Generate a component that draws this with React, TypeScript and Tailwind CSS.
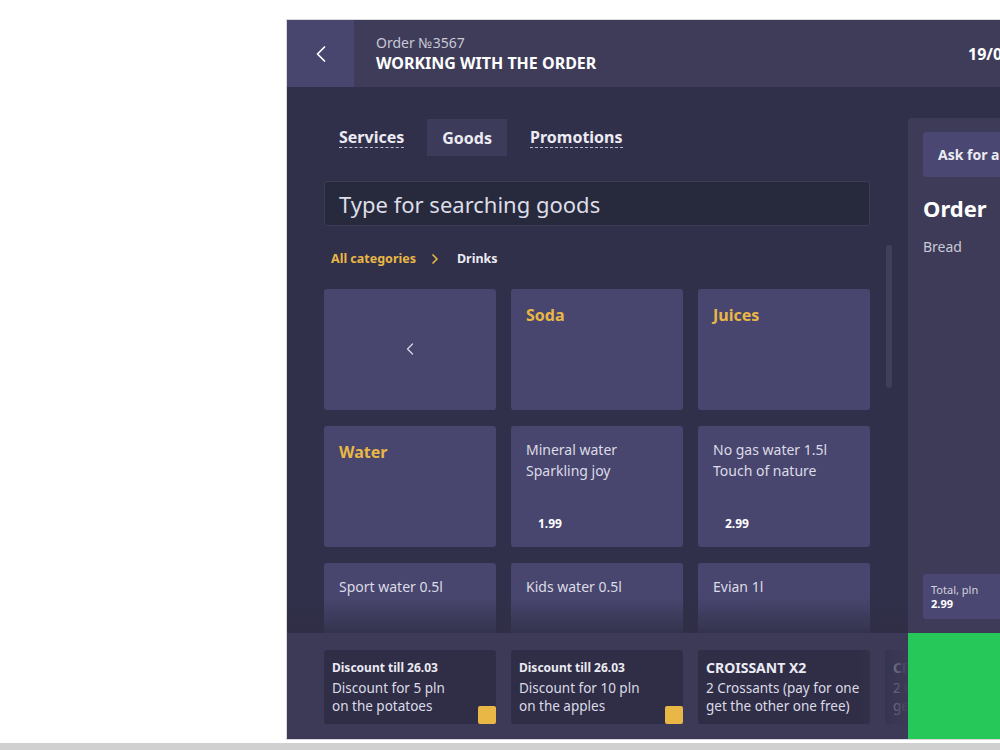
import { ChevronLeft, ChevronRight } from "lucide-react";

type Card =
  | { kind: "back" }
  | { kind: "category"; title: string }
  | { kind: "product"; lines: string[]; price?: string };

const cards: Card[] = [
  { kind: "back" },
  { kind: "category", title: "Soda" },
  { kind: "category", title: "Juices" },
  { kind: "category", title: "Water" },
  { kind: "product", lines: ["Mineral water", "Sparkling joy"], price: "1.99" },
  { kind: "product", lines: ["No gas water 1.5l", "Touch of nature"], price: "2.99" },
  { kind: "product", lines: ["Sport water 0.5l"] },
  { kind: "product", lines: ["Kids water 0.5l"] },
  { kind: "product", lines: ["Evian 1l"] },
];

const promos = [
  { title: "Discount till 26.03", text: ["Discount for 5 pln", "on the potatoes"], tag: true, caps: false },
  { title: "Discount till 26.03", text: ["Discount for 10 pln", "on the apples"], tag: true, caps: false },
  { title: "CROISSANT X2", text: ["2 Crossants (pay for one", "get the other one free)"], tag: false, caps: true },
  { title: "CROISSANT X2", text: ["2 Crossants (pay for one", "get the other one free)"], tag: false, caps: true },
];

function GoodsCard({ card }: { card: Card }) {
  if (card.kind === "back") {
    return (
      <div className="flex h-[121px] items-center justify-center rounded-[3px] bg-[#48466e]">
        <ChevronLeft className="size-5 text-[#d8d8e4]" strokeWidth={1.5} />
      </div>
    );
  }
  if (card.kind === "category") {
    return (
      <div className="h-[121px] rounded-[3px] bg-[#48466e] px-[15px] pt-[15px]">
        <div className="text-[16px] font-bold leading-[22px] text-[#e9b746]">{card.title}</div>
      </div>
    );
  }
  return (
    <div className="flex h-[121px] flex-col rounded-[3px] bg-[#48466e] px-[15px] pt-[13px] pb-[15px]">
      {card.lines.map((l) => (
        <div key={l} className="text-[14px] leading-[21px] text-[#dcdbe6]">
          {l}
        </div>
      ))}
      {card.price && (
        <div className="mt-auto pl-[12px] text-[12px] font-bold leading-[16px] text-white">{card.price}</div>
      )}
    </div>
  );
}

export default function App() {
  return (
    <div
      className="relative h-[750px] w-[1000px] overflow-hidden bg-white"
      style={{ fontFamily: '"Noto Sans", sans-serif' }}
    >
      <div className="ml-[286px] mt-[19px] h-[721px] w-[714px] overflow-hidden border-y border-l border-[#d9d9df]">
        <div className="flex h-full w-[900px] flex-col bg-[#31304a]">
          {/* header */}
          <div className="flex h-[67px] shrink-0 bg-[#3e3c59]">
            <div className="flex w-[67px] items-center justify-center bg-[#48466f]">
              <ChevronLeft className="size-7 text-white" strokeWidth={1.5} />
            </div>
            <div className="flex w-[614px] flex-col justify-center pl-[22px]">
              <div className="text-[14px] leading-[18px] text-[#c9c8d6]">Order №3567</div>
              <div className="text-[16px] font-bold leading-[22px] text-white">WORKING WITH THE ORDER</div>
            </div>
            <div className="flex items-center text-[16px] font-bold text-white">19/03/2020</div>
          </div>

          <div className="flex min-h-0 flex-1">
            {/* left column */}
            <div className="flex w-[621px] shrink-0 flex-col">
              <div className="relative min-h-0 flex-1 overflow-hidden pl-[37px] pr-[38px] pt-[32px]">
                <div className="flex gap-[8px]">
                  <div className="flex h-[37px] items-center px-[15px]">
                    <span className="border-b border-dashed border-[#b9b8cc] text-[16px] font-bold leading-[20px] text-[#ecebf3]">
                      Services
                    </span>
                  </div>
                  <div className="flex h-[37px] items-center bg-[#3d3b5a] px-[15px] text-[16px] font-bold text-[#ecebf3]">
                    Goods
                  </div>
                  <div className="flex h-[37px] items-center px-[15px]">
                    <span className="border-b border-dashed border-[#b9b8cc] text-[16px] font-bold leading-[20px] text-[#ecebf3]">
                      Promotions
                    </span>
                  </div>
                </div>

                <div className="mt-[25px] flex h-[45px] items-center rounded-[3px] border border-[#3b3d55] bg-[#272a3d] px-[14px] pt-[2px] text-[22px] text-[#dedde8]">
                  Type for searching goods
                </div>

                <div className="mt-[24px] flex items-center pl-[7px] text-[12.5px] font-bold">
                  <span className="text-[#e9b746]">All categories</span>
                  <ChevronRight className="ml-[11px] size-4 text-[#e9b746]" strokeWidth={2.5} />
                  <span className="ml-[14px] text-[#ecebf3]">Drinks</span>
                </div>

                <div className="mt-[20px] grid grid-cols-3 gap-x-[15px] gap-y-4">
                  {cards.map((c, i) => (
                    <GoodsCard key={i} card={c} />
                  ))}
                </div>

                <div className="absolute left-[599px] top-[158px] h-[143px] w-[6px] rounded-full bg-[#403f5a]" />
                <div className="pointer-events-none absolute inset-x-0 bottom-0 h-[36px] bg-gradient-to-b from-[#31304a]/0 to-[#2f2e45]/80" />
              </div>

              {/* promotions bar */}
              <div className="relative flex h-[106px] shrink-0 gap-[15px] overflow-hidden bg-[#3c3a57] pl-[37px] pt-[17px]">
                {promos.map((p, i) => (
                  <div
                    key={i}
                    className="relative h-[74px] w-[172px] shrink-0 rounded-[3px] bg-[#2f2e46] px-[8px] pt-[7px]"
                  >
                    <div
                      className={
                        p.caps
                          ? "text-[14px] font-bold leading-[22px] text-[#ecebf3]"
                          : "text-[12px] font-bold leading-[22px] text-[#ecebf3]"
                      }
                    >
                      {p.title}
                    </div>
                    {p.text.map((t) => (
                      <div key={t} className="whitespace-nowrap text-[13.5px] leading-[18px] text-[#dcdbe6]">
                        {t}
                      </div>
                    ))}
                    {p.tag && (
                      <div className="absolute bottom-0 right-0 size-[18px] rounded-[2px] bg-[#e9b746]" />
                    )}
                  </div>
                ))}
                <div className="pointer-events-none absolute inset-y-0 right-0 w-[50px] bg-gradient-to-r from-[#3c3a57]/0 to-[#3c3a57]" />
              </div>
            </div>

            {/* right column */}
            <div className="flex w-[220px] shrink-0 flex-col">
              <div className="mt-[31px] flex flex-1 flex-col rounded-tl-[4px] bg-[#3d3b58] px-[15px] pt-[14px] pb-[14px]">
                <div className="flex h-[45px] items-center rounded-[3px] bg-[#4a4772] px-[15px] text-[14px] font-bold text-[#ecebf3]">
                  Ask for a receipt
                </div>
                <div className="mt-[17px] text-[22px] font-bold leading-[28px] text-white">Order</div>
                <div className="mt-[16px] text-[14px] leading-[18px] text-[#cac9d6]">Bread</div>
                <div className="mt-auto flex h-[45px] flex-col justify-center rounded-[3px] bg-[#4a4772] px-[8px]">
                  <div className="text-[11px] leading-[14px] text-[#d2d1de]">Total, pln</div>
                  <div className="text-[11px] font-bold leading-[14px] text-white">2.99</div>
                </div>
              </div>
              <div className="h-[106px] shrink-0 bg-[#26c85a]" />
            </div>
          </div>
        </div>
      </div>
      <div className="absolute inset-x-0 bottom-0 h-[7px] bg-[#d0d0d0]" />
    </div>
  );
}
